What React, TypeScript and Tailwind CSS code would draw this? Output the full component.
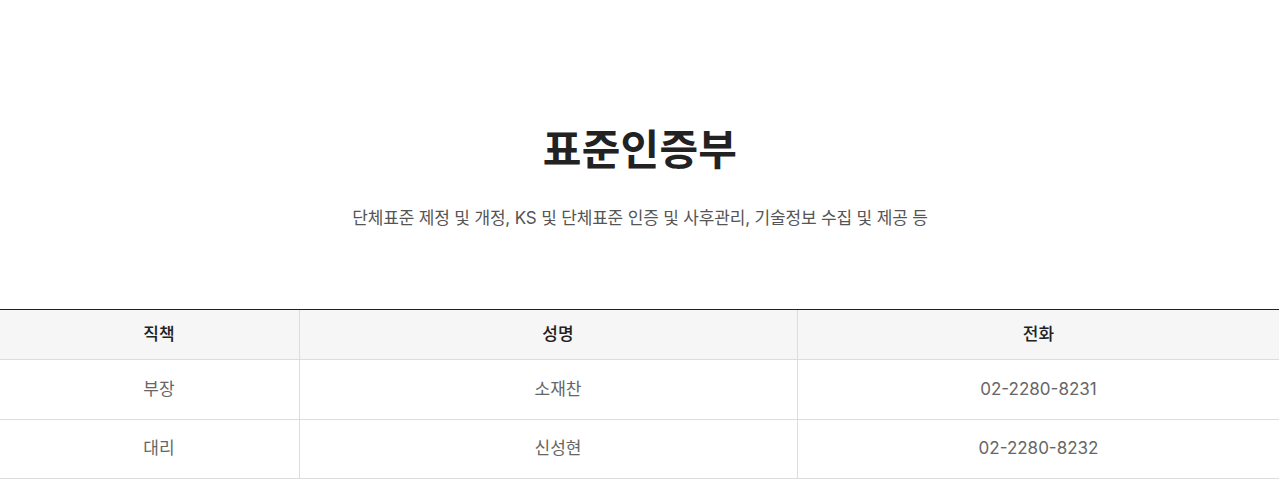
import React from "react";

const rows = [
  { pos: "부장", name: "소재찬", tel: "02-2280-8231", h: "h-[60px]" },
  { pos: "대리", name: "신성현", tel: "02-2280-8232", h: "h-[59px]" },
];

export default function App() {
  return (
    <div
      className="w-[1280px] h-[479px] bg-white overflow-hidden"
      style={{ fontFamily: "Inter, 'Noto Sans CJK KR', sans-serif" }}
    >
      <div className="pt-[124px] flex flex-col items-center">
        <h1 className="text-[42px] leading-[52px] font-bold text-[#222] tracking-[0.005em]">표준인증부</h1>
        <p className="mt-[30px] text-[17px] leading-[24px] text-[#555] tracking-[-0.01em]">
          단체표준 제정 및 개정, KS 및 단체표준 인증 및 사후관리, 기술정보 수집 및 제공 등
        </p>
      </div>
      <div className="mt-[79px] w-[1279px] border-t border-[#222]">
        <div className="flex h-[50px] bg-[#f6f6f6] border-b border-[#dddddd] text-[17px] font-medium text-[#222]">
          <div className="w-[300px] pl-[19px] border-r border-[#dddddd] flex items-center justify-center">직책</div>
          <div className="w-[498px] pl-[19px] border-r border-[#dddddd] flex items-center justify-center">성명</div>
          <div className="flex-1 flex items-center justify-center">전화</div>
        </div>
        {rows.map((r) => (
          <div key={r.tel} className={`flex ${r.h} border-b border-[#dddddd] text-[17px] text-[#666]`}>
            <div className="w-[300px] pl-[19px] border-r border-[#dddddd] flex items-center justify-center">{r.pos}</div>
            <div className="w-[498px] pl-[19px] border-r border-[#dddddd] flex items-center justify-center">{r.name}</div>
            <div className="flex-1 flex items-center justify-center">{r.tel}</div>
          </div>
        ))}
      </div>
    </div>
  );
}
